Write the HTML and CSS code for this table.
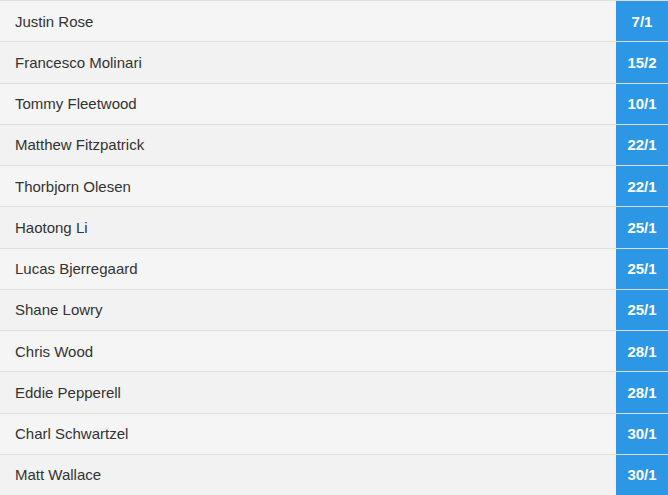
FILE: index.html
```html
<!DOCTYPE html>
<html>
<head>
<meta charset="utf-8">
<link rel="stylesheet" href="styles.css">
</head>
<body>
<div class="list">
  <div class="row"><div class="name">Justin Rose</div><div class="odds">7/1</div></div>
  <div class="row"><div class="name">Francesco Molinari</div><div class="odds">15/2</div></div>
  <div class="row"><div class="name">Tommy Fleetwood</div><div class="odds">10/1</div></div>
  <div class="row"><div class="name">Matthew Fitzpatrick</div><div class="odds">22/1</div></div>
  <div class="row"><div class="name">Thorbjorn Olesen</div><div class="odds">22/1</div></div>
  <div class="row"><div class="name">Haotong Li</div><div class="odds">25/1</div></div>
  <div class="row"><div class="name">Lucas Bjerregaard</div><div class="odds">25/1</div></div>
  <div class="row"><div class="name">Shane Lowry</div><div class="odds">25/1</div></div>
  <div class="row"><div class="name">Chris Wood</div><div class="odds">28/1</div></div>
  <div class="row"><div class="name">Eddie Pepperell</div><div class="odds">28/1</div></div>
  <div class="row"><div class="name">Charl Schwartzel</div><div class="odds">30/1</div></div>
  <div class="row"><div class="name">Matt Wallace</div><div class="odds">30/1</div></div>
</div>
</body>
</html>
```
FILE: styles.css
```css
html, body {
  margin: 0;
  padding: 0;
  background: #f5f5f5;
}
body {
  font-family: "Liberation Sans", Arial, sans-serif;
  width: 668px;
  height: 495px;
  overflow: hidden;
}
.list {
  display: grid;
  grid-template-rows: repeat(12, 1fr);
  height: 495px;
}
.row {
  display: flex;
  align-items: stretch;
  border-top: 1px solid #dedede;
  background: #f5f5f5;
}
.row:nth-child(even) {
  background: #f2f2f2;
}
.name {
  flex: 1;
  display: flex;
  align-items: center;
  padding-left: 15px;
  font-size: 15px;
  color: #333;
}
.odds {
  width: 52px;
  display: flex;
  align-items: center;
  justify-content: center;
  background: #2b97e5;
  color: #fff;
  font-weight: bold;
  font-size: 15px;
}
```
